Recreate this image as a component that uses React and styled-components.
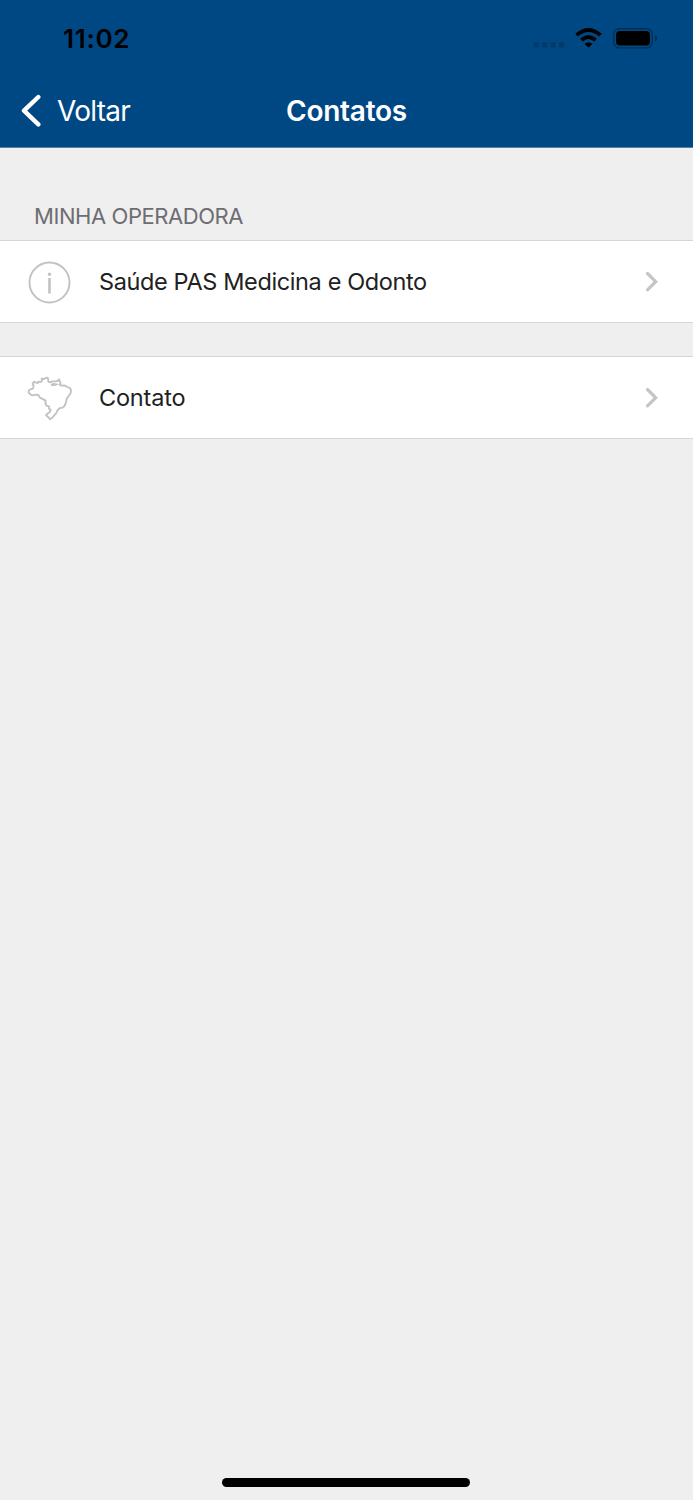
import styled, { createGlobalStyle } from 'styled-components';

const GlobalStyle = createGlobalStyle`
	* {
		box-sizing: border-box;
	}

	body {
		margin: 0;
		background-color: #efefef;
		font-family: Inter, 'Liberation Sans', sans-serif;
	}
`;

const Screen = styled.div`
	display: flex;
	flex-direction: column;
	height: 1500px;
	background-color: #efefef;
`;

const Header = styled.header`
	height: 148px;
	background-color: #004883;
	border-bottom: 1px solid #557fa3;
`;

const StatusBar = styled.div`
	display: flex;
	align-items: center;
	justify-content: space-between;
	height: 75px;
	padding: 0 35px 0 63px;
`;

const Time = styled.span`
	padding-top: 2px;
	font-size: 26px;
	font-weight: 600;
	line-height: 32px;
	letter-spacing: 0.7px;
	color: #000;
`;

const StatusIcons = styled.svg`
	display: block;
	width: 125px;
	height: 30px;
`;

const NavBar = styled.nav`
	display: grid;
	grid-template-columns: 1fr auto 1fr;
	align-items: center;
	height: 72px;
	color: #fff;
`;

const BackButton = styled.button`
	display: flex;
	align-items: center;
	gap: 14px;
	padding: 0 0 0 20px;
	border: 0;
	background: none;
	color: inherit;
	font-family: inherit;
	font-size: 28px;
	line-height: 34px;
	letter-spacing: -0.75px;
`;

const BackIcon = styled.svg`
	display: block;
	width: 23px;
	height: 34px;
`;

const Title = styled.h1`
	margin: 0;
	font-size: 28px;
	font-weight: 600;
	line-height: 34px;
	letter-spacing: -0.25px;
`;

const SectionTitle = styled.h2`
	margin: 0;
	height: 92px;
	padding: 54px 34px 0;
	font-size: 22px;
	font-weight: 400;
	line-height: 28px;
	letter-spacing: -0.43px;
	color: #6d6d72;
`;

const List = styled.div`
	display: flex;
	flex-direction: column;
	gap: 33px;
`;

const Row = styled.div`
	display: flex;
	align-items: center;
	height: 83px;
	padding: 0 34px 0 20px;
	border-top: 1px solid #d6d6d6;
	border-bottom: 1px solid #d6d6d6;
	background-color: #fff;
`;

const RowIcon = styled.svg`
	display: block;
	width: 60px;
	height: 56px;
`;

const RowLabel = styled.span`
	flex: 1;
	padding-left: 19px;
	font-size: 23.5px;
	line-height: 30px;
	letter-spacing: ${({ $spacing }) => $spacing || '0'};
	color: #212121;
`;

const Chevron = styled.svg`
	display: block;
	width: 16px;
	height: 24px;
`;

const HomeIndicator = styled.div`
	width: 248px;
	height: 9px;
	margin: auto 223px 13px 222px;
	border-radius: 5px;
	background-color: #000;
`;

const InfoIcon = () => (
	<RowIcon viewBox="0 0 60 56" fill="none" stroke="#c2c2c2">
		<circle cx="29.5" cy="28.5" r="20" strokeWidth="1.9" />
		<path d="M29.5 24V39.5" strokeWidth="2.6" />
		<circle cx="29.5" cy="20.3" r="1.7" fill="#c2c2c2" stroke="none" />
	</RowIcon>
);

const BrazilIcon = () => (
	<RowIcon viewBox="0 0 180 168" fill="none">
		<path
			d="M38 40 L42 36 L49 38 L53 39 L55 35 L62 36 L66 33 L65 26 L71 27 L80 23 L84 25 L85 34 L90 37 L98 34 L105 34 L112 33 L117 28 L122 40 L119 44 L124 47 L133 46 L142 51 L151 55 L153 61 L152 69 L146 78 L140 86 L138 97 L134 107 L129 112 L118 115 L112 122 L109 129 L102 137 L96 144 L90 148 L87 143 L78 136 L82 131 L90 125 L92 119 L87 117 L87 109 L79 107 L76 99 L77 92 L70 88 L60 83 L55 75 L47 74 L40 76 L34 75 L30 72 L26 68 L26 63 L29 59 L39 56 L41 47 L38 43Z"
			stroke="#c2c2c2"
			strokeWidth="5.6"
			strokeLinejoin="round"
		/>
		<path
			d="M92 43 L99 39 L107 40 L117 43 L107 47 L94 49Z"
			fill="#c2c2c2"
		/>
	</RowIcon>
);

const ChevronIcon = () => (
	<Chevron viewBox="0 0 16 24" fill="none">
		<path
			d="M4.5 3.5L12.7 11.7L4.5 19.9"
			stroke="#c5c5c8"
			strokeWidth="3.2"
			strokeLinecap="round"
		/>
	</Chevron>
);

const StatusGlyphs = () => (
	<StatusIcons viewBox="0 0 125 30">
		<g fill="#003b6c">
			<rect x="0.7" y="19" width="5.5" height="5.5" rx="1.6" />
			<rect x="9" y="19" width="5.5" height="5.5" rx="1.6" />
			<rect x="17.3" y="19" width="5.5" height="5.5" rx="1.6" />
			<rect x="25.8" y="19" width="5.5" height="5.5" rx="1.6" />
		</g>
		<g fill="none" stroke="#000" strokeWidth="3.8">
			<path d="M43.6 12.1Q55.5 1.9 67.4 12.1" />
			<path d="M48.4 17Q55.5 10.8 62.6 17" />
		</g>
		<path d="M51.6 20.8Q55.5 17.6 59.4 20.8L55.5 24.8Z" />
		<rect
			x="80.7"
			y="5.7"
			width="38.6"
			height="19.2"
			rx="5.7"
			fill="none"
			stroke="#002f58"
			strokeWidth="1.4"
		/>
		<rect x="83" y="8" width="34" height="14.5" rx="3.8" />
		<path d="M122 12.2Q124.4 13.3 124.4 15.3T122 18.4Z" fill="#002f58" />
	</StatusIcons>
);

const App = () => (
	<>
		<GlobalStyle />
		<Screen>
			<Header>
				<StatusBar>
					<Time>11:02</Time>
					<StatusGlyphs />
				</StatusBar>
				<NavBar>
					<BackButton>
						<BackIcon viewBox="0 0 23 34" fill="none">
							<path
								d="M18.3 3L4 16.7L18.3 30.4"
								stroke="#fff"
								strokeWidth="4.4"
								strokeLinecap="round"
								strokeLinejoin="round"
							/>
						</BackIcon>
						Voltar
					</BackButton>
					<Title>Contatos</Title>
				</NavBar>
			</Header>
			<SectionTitle>MINHA OPERADORA</SectionTitle>
			<List>
				<Row>
					<InfoIcon />
					<RowLabel $spacing="-0.38px">Saúde PAS Medicina e Odonto</RowLabel>
					<ChevronIcon />
				</Row>
				<Row>
					<BrazilIcon />
					<RowLabel $spacing="-0.2px">Contato</RowLabel>
					<ChevronIcon />
				</Row>
			</List>
			<HomeIndicator />
		</Screen>
	</>
);

export default App;
